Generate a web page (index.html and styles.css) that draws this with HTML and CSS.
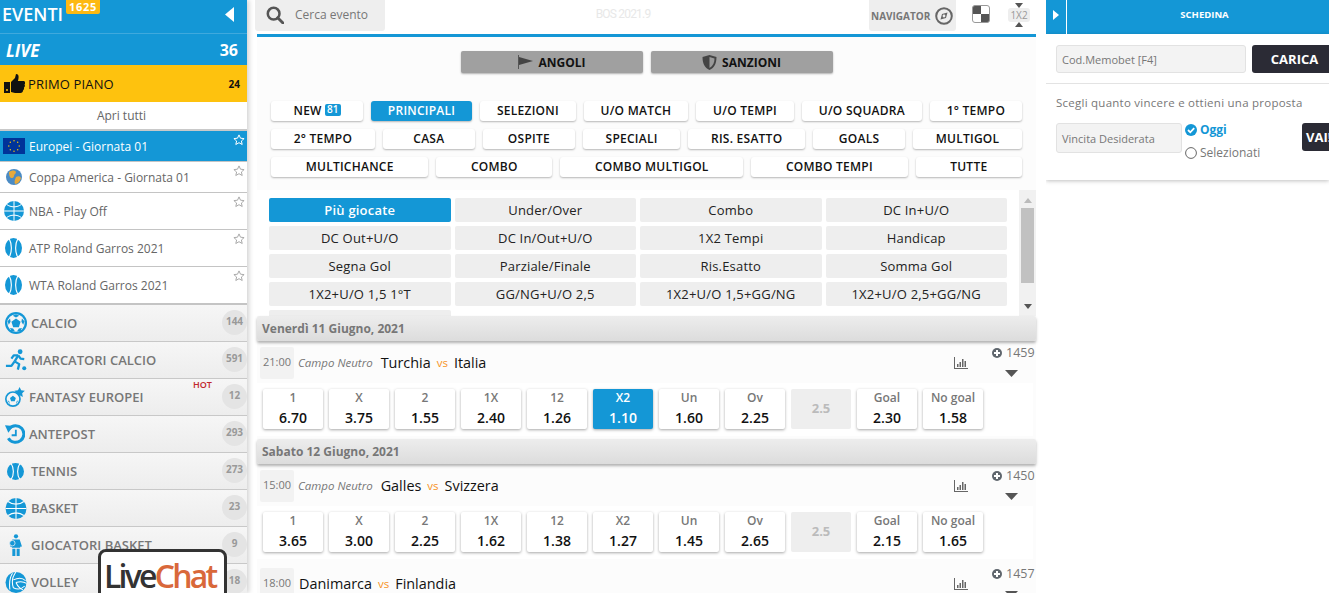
FILE: index.html
```html
<!DOCTYPE html>
<html lang="it">
<head>
<meta charset="utf-8">
<title>Eventi</title>
<link rel="stylesheet" href="styles.css">
</head>
<body>
<svg class="defs" width="0" height="0" aria-hidden="true">
  <symbol id="i-basket" viewBox="0 0 24 24"><circle cx="12" cy="12" r="12" fill="#1497d6"/><g fill="none" stroke="#fff" stroke-width="1.2"><path d="M12 0v24M0 12h24M3 4c5 4 13 4 18 0M3 20c5-4 13-4 18 0"/></g></symbol>
  <symbol id="i-tennis" viewBox="0 0 24 24" preserveAspectRatio="none"><circle cx="12" cy="12" r="12" fill="#1497d6"/><g fill="none" stroke="#fff" stroke-width="1.6"><path d="M6 1c4 6 4 16 0 22M18 1c-4 6-4 16 0 22"/></g></symbol>
  <symbol id="i-soccer" viewBox="0 0 24 24"><circle cx="12" cy="12" r="12" fill="#1497d6"/><circle cx="12" cy="12" r="9.5" fill="#f4f4f4"/><path d="M12 7l5 3.6-1.9 5.9H8.900L7 10.600zM12 2.500l3.500 1.500-3.500 2-3.500-2zM2.800 10l2.700-3 .6 3.500-2 3.500zM21.200 10l-2.700-3-.6 3.500 2 3.500zM7 21l-1.500-3.500 3.300.6 2 3zM17 21l1.500-3.500-3.300.6-2 3z" fill="#1497d6"/></symbol>
  <symbol id="i-run" viewBox="0 0 24 24"><circle cx="16.500" cy="3" r="2.600" fill="#1497d6"/><circle cx="21" cy="21" r="2.200" fill="#1497d6"/><g fill="none" stroke="#1497d6" stroke-width="2.500" stroke-linejoin="round"><path d="M14.500 7L10.500 13.500"/><path d="M14.500 7l2.500 3.500 4 .5"/><path d="M14.500 7H9.500L7 10.500"/><path d="M10.500 13.500l5 3-1.500 6"/><path d="M10.500 13.500L7 18.500H1"/></g></symbol>
  <symbol id="i-fantasy" viewBox="0 0 24 24"><path d="M17.500 0l1.900 4 4.400.6-3.200 3 .8 4.400-3.900-2.100-3.900 2.100.8-4.400-3.200-3 4.400-.6z" fill="#1497d6"/><circle cx="9.500" cy="14.500" r="8.500" fill="#f4f4f4" stroke="#1497d6" stroke-width="2"/><path d="M9.500 10.500l3.500 2.600-1.300 4.100H7.300L6 13.100zM3 16l2 1 1 4zM16 16l-2 1-1 4z" fill="#1497d6"/></symbol>
  <symbol id="i-ante" viewBox="0 0 24 24"><g fill="none" stroke="#1497d6" stroke-width="3.600"><path d="M5 5.500A10 10 0 1 1 4 17"/><path d="M13 7v6.500H8" stroke-width="2.200"/></g><path d="M0 1.500l10 1-6 8z" fill="#1497d6"/></symbol>
  <symbol id="i-player" viewBox="0 0 16 24"><g fill="#1497d6"><circle cx="8" cy="2.500" r="2.300"/><path d="M4 6h8l2.500 7.500-2 .5V15H3.500v-1l-2-.5zM4 16h3.300v8H4zM8.700 16H12v8H8.700z"/></g><circle cx="4" cy="10" r="3" fill="#1497d6" stroke="#f4f4f4" stroke-width=".8"/></symbol>
  <symbol id="i-volley" viewBox="0 0 24 24"><circle cx="12" cy="12" r="12" fill="#1497d6"/><g fill="none" stroke="#fff" stroke-width="1.200"><path d="M12 0c-4 5-5 12-3 18M8 1.500C5 6 4 12 5 20M12 12c6-2 9-1 12 1M9 9c6-3 11-2 14 1M12 12c2 5 6 8 8 8M9 18c4 2 9 2 13-2"/></g></symbol>
  <symbol id="i-stats" viewBox="0 0 14 12"><g fill="#666"><path d="M0 0h1v11h13v1H0z"/><path d="M3 7h1.500v3H3zM5.500 5H7v5H5.500zM8 2h1.500v8H8zM10.500 4H12v6h-1.500z"/></g></symbol>
  <symbol id="i-plus" viewBox="0 0 10 10"><circle cx="5" cy="5" r="5" fill="#5f666d"/><path d="M4 2h2v2h2v2H6v2H4V6H2V4h2z" fill="#fff"/></symbol>
  <symbol id="i-star" viewBox="0 0 12 12"><path d="M6 .9l1.500 3.300 3.600.4-2.700 2.400.8 3.500L6 8.700l-3.200 1.800.8-3.500L.9 4.600l3.600-.4z" fill="none" stroke="currentColor" stroke-width="1"/></symbol>
</svg>

<div class="app">
  <aside class="side">
    <div class="side-head">
      <span class="side-title">EVENTI</span><span class="side-badge">1625</span>
      <svg class="side-arrow" width="10" height="15" viewBox="0 0 10 15"><path d="M9 0v15L0 7.500z" fill="#fff"/></svg>
    </div>
    <div class="live"><span class="live-label">LIVE</span><span>36</span></div>
    <div class="primo">
      <svg class="primo-icon" width="21" height="19" viewBox="0 0 21 19"><path d="M0 8h6v11H0z" fill="#111"/><path d="M7 8l4-4 1-4c3 0 3 3 2 7h6c2 1 1 3 .5 3.500.8 1 .5 2.500-.5 3 .3 1.500-.2 2.500-1 3 0 1.500-1 2.500-2.500 2.500H11L7 18z" fill="#111"/><circle cx="3" cy="16" r="1" fill="#fec20e"/></svg>
      <span class="primo-label">PRIMO PIANO</span><span class="primo-count">24</span>
    </div>
    <div class="open-all">Apri tutti</div>
    <div class="league league-on">
      <svg class="flag" width="22" height="16" viewBox="0 0 22 16"><rect width="22" height="16" fill="#003399"/><g fill="#fc0"><circle cx="11" cy="2.800" r=".7"/><circle cx="11" cy="13.200" r=".7"/><circle cx="5.800" cy="8" r=".7"/><circle cx="16.200" cy="8" r=".7"/><circle cx="7.300" cy="4.300" r=".7"/><circle cx="14.700" cy="4.300" r=".7"/><circle cx="7.300" cy="11.700" r=".7"/><circle cx="14.700" cy="11.700" r=".7"/></g></svg>
      <span class="league-name">Europei - Giornata 01</span>
      <svg class="star" width="12" height="12"><use href="#i-star"/></svg>
    </div>
    <div class="league">
      <svg class="league-icon" width="16" height="16" viewBox="0 0 16 16"><circle cx="8" cy="8" r="8" fill="#4b8bc4"/><path d="M3 3c3-2 6-2 7 0 0 2-2 2-2 4s-3 3-4 1-1-3-1-5zM10 8c2-1 4-1 5 1-1 3-3 6-6 6-1-2 0-5 1-7z" fill="#e8a93a"/></svg>
      <span class="league-name">Coppa America - Giornata 01</span>
      <svg class="star" width="12" height="12"><use href="#i-star"/></svg>
    </div>
    <div class="league league-tall">
      <svg class="league-icon-lg" width="20" height="20"><use href="#i-basket"/></svg>
      <span class="league-name">NBA - Play Off</span>
      <svg class="star" width="12" height="12"><use href="#i-star"/></svg>
    </div>
    <div class="league league-tall">
      <svg class="league-ball" width="17" height="20"><use href="#i-tennis"/></svg>
      <span class="league-name">ATP Roland Garros 2021</span>
      <svg class="star" width="12" height="12"><use href="#i-star"/></svg>
    </div>
    <div class="league league-tall league-last">
      <svg class="league-ball" width="17" height="20"><use href="#i-tennis"/></svg>
      <span class="league-name">WTA Roland Garros 2021</span>
      <svg class="star" width="12" height="12"><use href="#i-star"/></svg>
    </div>

    <div class="sport"><svg class="sport-icon" width="22" height="22"><use href="#i-soccer"/></svg><span class="sport-name">CALCIO</span><span class="sport-count">144</span></div>
    <div class="sport"><svg class="sport-icon" width="22" height="22"><use href="#i-run"/></svg><span class="sport-name">MARCATORI CALCIO</span><span class="sport-count">591</span></div>
    <div class="sport"><svg class="sport-icon sport-icon-tight" width="20" height="20"><use href="#i-fantasy"/></svg><span class="sport-name">FANTASY EUROPEI</span><span class="hot">HOT</span><span class="sport-count">12</span></div>
    <div class="sport"><svg class="sport-icon sport-icon-tight" width="20" height="20"><use href="#i-ante"/></svg><span class="sport-name">ANTEPOST</span><span class="sport-count">293</span></div>
    <div class="sport"><svg class="sport-ball" width="17" height="17"><use href="#i-tennis"/></svg><span class="sport-name">TENNIS</span><span class="sport-count">273</span></div>
    <div class="sport"><svg class="sport-icon" width="22" height="21"><use href="#i-basket"/></svg><span class="sport-name">BASKET</span><span class="sport-count">23</span></div>
    <div class="sport"><svg class="sport-icon" width="22" height="22"><use href="#i-player"/></svg><span class="sport-name">GIOCATORI BASKET</span><span class="sport-count">9</span></div>
    <div class="sport"><svg class="sport-icon" width="22" height="21"><use href="#i-volley"/></svg><span class="sport-name">VOLLEY</span><span class="sport-count">18</span></div>
  </aside>

  <main class="main">
    <div class="top">
      <div class="search">
        <svg width="18" height="18" viewBox="0 0 20 20"><circle cx="8.500" cy="8.500" r="6.500" fill="none" stroke="#555" stroke-width="2.800"/><path d="M13 13l6 6" stroke="#555" stroke-width="3.200" stroke-linecap="round"/></svg>
        <span>Cerca evento</span>
      </div>
      <div class="version">BOS 2021.9</div>
      <div class="nav-box">
        <span>NAVIGATOR</span>
        <svg width="18" height="18" viewBox="0 0 18 18"><circle cx="9" cy="9" r="7.800" fill="none" stroke="#666" stroke-width="2"/><path d="M5.500 12.500l1.500-5.500 5.500-1.500-1.500 5.500z" fill="#666"/><circle cx="9" cy="9" r="1.400" fill="#eee"/></svg>
      </div>
      <svg class="checker" width="18" height="18" viewBox="0 0 18 18"><path d="M3 .5h6V9H.5V3A2.500 2.500 0 0 1 3 .5zM9 9h8.500v6a2.500 2.500 0 0 1-2.500 2.500H9z" fill="#555"/><rect x=".5" y=".5" width="17" height="17" rx="2.500" fill="none" stroke="#999"/></svg>
      <div class="mode">
        <svg width="8" height="5" viewBox="0 0 8 5"><path d="M0 0h8L4 5z" fill="#555"/></svg>
        <span>1X2</span>
        <svg width="8" height="5" viewBox="0 0 8 5"><path d="M0 5h8L4 0z" fill="#555"/></svg>
      </div>
    </div>
    <div class="blue-line"></div>

    <div class="content">
      <div class="specials">
        <div class="special">
          <svg width="16" height="14" viewBox="0 0 16 14"><path d="M1 0h1v14H1z" fill="#555"/><path d="M2 2l14 4-14 4z" fill="#444"/></svg>
          <span>ANGOLI</span>
        </div>
        <div class="special">
          <svg width="15" height="15" viewBox="0 0 15 15"><path d="M7.500 0l7 2c0 6-2 11-7 13-5-2-7-7-7-13z" fill="#444"/><path d="M7.500 2l5 1.500c0 4-1.500 7.500-5 9.500z" fill="#999"/></svg>
          <span>SANZIONI</span>
        </div>
      </div>

      <div class="tabs">
        <div class="tab-row">
          <div class="tab">NEW <span class="tab-badge">81</span></div>
          <div class="tab tab-on">PRINCIPALI</div>
          <div class="tab">SELEZIONI</div>
          <div class="tab">U/O MATCH</div>
          <div class="tab">U/O TEMPI</div>
          <div class="tab">U/O SQUADRA</div>
          <div class="tab">1° TEMPO</div>
        </div>
        <div class="tab-row">
          <div class="tab">2° TEMPO</div>
          <div class="tab">CASA</div>
          <div class="tab">OSPITE</div>
          <div class="tab">SPECIALI</div>
          <div class="tab">RIS. ESATTO</div>
          <div class="tab">GOALS</div>
          <div class="tab">MULTIGOL</div>
        </div>
        <div class="tab-row">
          <div class="tab">MULTICHANCE</div>
          <div class="tab">COMBO</div>
          <div class="tab">COMBO MULTIGOL</div>
          <div class="tab">COMBO TEMPI</div>
          <div class="tab">TUTTE</div>
        </div>
      </div>

      <div class="markets">
        <div class="market-grid">
          <div class="market market-on">Più giocate</div>
          <div class="market">Under/Over</div>
          <div class="market">Combo</div>
          <div class="market">DC In+U/O</div>
          <div class="market">DC Out+U/O</div>
          <div class="market">DC In/Out+U/O</div>
          <div class="market">1X2 Tempi</div>
          <div class="market">Handicap</div>
          <div class="market">Segna Gol</div>
          <div class="market">Parziale/Finale</div>
          <div class="market">Ris.Esatto</div>
          <div class="market">Somma Gol</div>
          <div class="market">1X2+U/O 1,5 1°T</div>
          <div class="market">GG/NG+U/O 2,5</div>
          <div class="market">1X2+U/O 1,5+GG/NG</div>
          <div class="market">1X2+U/O 2,5+GG/NG</div>
          <div class="market"></div>
        </div>
        <div class="scroll">
          <svg width="8" height="5" viewBox="0 0 8 5"><path d="M0 5h8L4 0z" fill="#bbb"/></svg>
          <div class="scroll-thumb"></div>
          <svg width="8" height="5" viewBox="0 0 8 5"><path d="M0 0h8L4 5z" fill="#555"/></svg>
        </div>
      </div>

      <div class="date">Venerdì 11 Giugno, 2021</div>
      <div class="event">
        <span class="time">21:00</span><span class="venue">Campo Neutro</span>
        <span class="team">Turchia</span><span class="vs">vs</span><span class="team">Italia</span>
        <svg class="stats" width="14" height="12"><use href="#i-stats"/></svg>
        <div class="more"><div class="more-top"><svg width="10" height="10"><use href="#i-plus"/></svg><span>1459</span></div><svg class="more-arrow" width="13" height="7" viewBox="0 0 13 7"><path d="M0 0h13L6.500 7z" fill="#555"/></svg></div>
      </div>
      <div class="odds">
        <div class="odd"><span class="odd-k">1</span><span class="odd-v">6.70</span></div>
        <div class="odd"><span class="odd-k">X</span><span class="odd-v">3.75</span></div>
        <div class="odd"><span class="odd-k">2</span><span class="odd-v">1.55</span></div>
        <div class="odd"><span class="odd-k">1X</span><span class="odd-v">2.40</span></div>
        <div class="odd"><span class="odd-k">12</span><span class="odd-v">1.26</span></div>
        <div class="odd odd-on"><span class="odd-k">X2</span><span class="odd-v">1.10</span></div>
        <div class="odd"><span class="odd-k">Un</span><span class="odd-v">1.60</span></div>
        <div class="odd"><span class="odd-k">Ov</span><span class="odd-v">2.25</span></div>
        <div class="odd-line">2.5</div>
        <div class="odd"><span class="odd-k">Goal</span><span class="odd-v">2.30</span></div>
        <div class="odd"><span class="odd-k">No goal</span><span class="odd-v">1.58</span></div>
      </div>

      <div class="date">Sabato 12 Giugno, 2021</div>
      <div class="event">
        <span class="time">15:00</span><span class="venue">Campo Neutro</span>
        <span class="team">Galles</span><span class="vs">vs</span><span class="team">Svizzera</span>
        <svg class="stats" width="14" height="12"><use href="#i-stats"/></svg>
        <div class="more"><div class="more-top"><svg width="10" height="10"><use href="#i-plus"/></svg><span>1450</span></div><svg class="more-arrow" width="13" height="7" viewBox="0 0 13 7"><path d="M0 0h13L6.500 7z" fill="#555"/></svg></div>
      </div>
      <div class="odds">
        <div class="odd"><span class="odd-k">1</span><span class="odd-v">3.65</span></div>
        <div class="odd"><span class="odd-k">X</span><span class="odd-v">3.00</span></div>
        <div class="odd"><span class="odd-k">2</span><span class="odd-v">2.25</span></div>
        <div class="odd"><span class="odd-k">1X</span><span class="odd-v">1.62</span></div>
        <div class="odd"><span class="odd-k">12</span><span class="odd-v">1.38</span></div>
        <div class="odd"><span class="odd-k">X2</span><span class="odd-v">1.27</span></div>
        <div class="odd"><span class="odd-k">Un</span><span class="odd-v">1.45</span></div>
        <div class="odd"><span class="odd-k">Ov</span><span class="odd-v">2.65</span></div>
        <div class="odd-line">2.5</div>
        <div class="odd"><span class="odd-k">Goal</span><span class="odd-v">2.15</span></div>
        <div class="odd"><span class="odd-k">No goal</span><span class="odd-v">1.65</span></div>
      </div>

      <div class="event">
        <span class="time">18:00</span>
        <span class="team">Danimarca</span><span class="vs">vs</span><span class="team">Finlandia</span>
        <svg class="stats" width="14" height="12"><use href="#i-stats"/></svg>
        <div class="more"><div class="more-top"><svg width="10" height="10"><use href="#i-plus"/></svg><span>1457</span></div><svg class="more-arrow" width="13" height="7" viewBox="0 0 13 7"><path d="M0 0h13L6.500 7z" fill="#555"/></svg></div>
      </div>
    </div>
  </main>

  <aside class="slip">
    <div class="slip-head">
      <div class="slip-toggle"><svg width="6" height="10" viewBox="0 0 6 10"><path d="M0 0v10l6-5z" fill="#fff"/></svg></div>
      <div class="slip-title">SCHEDINA</div>
    </div>
    <div class="slip-body">
      <div class="slip-code">
        <div class="field field-code">Cod.Memobet [F4]</div>
        <div class="dark-btn btn-load">CARICA</div>
      </div>
      <div class="slip-want">
        <div class="want-text">Scegli quanto vincere e ottieni una proposta</div>
        <div class="want-row">
          <div class="field field-win">Vincita Desiderata</div>
          <div class="choices">
            <div class="choice choice-on"><svg width="12" height="12" viewBox="0 0 12 12"><circle cx="6" cy="6" r="6" fill="#1497d6"/><path d="M3 6l2.300 2.300L9.200 4.200" fill="none" stroke="#fff" stroke-width="1.800"/></svg><span>Oggi</span></div>
            <div class="choice"><svg width="12" height="12" viewBox="0 0 12 12"><circle cx="6" cy="6" r="5.400" fill="#fff" stroke="#666"/></svg><span>Selezionati</span></div>
          </div>
          <div class="dark-btn btn-go">VAI!</div>
        </div>
      </div>
    </div>
  </aside>
</div>

<div class="livechat"><span class="lc-live">Live</span><span class="lc-chat">Chat</span></div>
</body>
</html>
```
FILE: styles.css
```css
* { box-sizing: border-box; }
html, body { margin: 0; padding: 0; height: 593px; overflow: hidden; background: #fff; }
body { font-family: "Open Sans", "Liberation Sans", sans-serif; color: #111; position: relative; }
.defs { position: absolute; }
svg { display: block; flex: none; }

.app { display: flex; width: 1329px; height: 593px; align-items: flex-start; }

/* sidebar */
.side { width: 247px; height: 593px; flex: none; background: #fff; box-shadow: 2px 0 5px rgba(0,0,0,.18); overflow: hidden; }
.side-head { height: 34px; background: #1497d6; border-bottom: 1px solid #3fa9dd; color: #fff; display: flex; align-items: flex-start; position: relative; padding-left: 2px; }
.side-title { font-size: 18px; font-weight: 600; line-height: 29px; }
.side-badge { background: #fdb913; color: #fff; font-size: 11px; font-weight: 700; line-height: 13px; height: 14px; padding: 0 3px; margin-left: 3px; border-radius: 0 0 2px 2px; letter-spacing: .7px; }
.side-arrow { margin-left: auto; margin-right: 12px; margin-top: 7px; }
.live { height: 31px; background: #1497d6; color: #fff; display: flex; justify-content: space-between; align-items: center; padding: 1px 9px 0 6px; font-size: 16px; font-weight: 700; }
.live-label { font-style: italic; font-size: 17px; }
.primo { height: 37px; background: #fec20e; display: flex; align-items: center; padding-left: 4px; }
.primo-icon { margin-right: 3px; }
.primo-label { font-size: 13px; flex: 1; letter-spacing: .15px; }
.primo-count { font-size: 10px; font-weight: 700; margin-right: 7px; }
.open-all { height: 29px; border-bottom: 2px solid #c9c9c9; font-size: 12px; color: #666; text-align: center; line-height: 27px; padding-right: 4px; }
.league { height: 31px; border-bottom: 1px solid #c4c4c4; display: flex; align-items: center; padding-left: 6px; position: relative; color: #666; font-size: 12px; }
.league-tall { height: 37px; padding-left: 4px; }
.league-last { height: 38px; border-bottom: 2px solid #c4c4c4; }
.league-on { background: #1497d6; color: #fff; padding-left: 3px; }
.flag { margin-right: 4px; }
.league-icon { margin-right: 7px; }
.league-icon-lg { margin-right: 5px; }
.league-ball { margin: 0 7px 0 1px; }
.league-name { line-height: 29px; }
.star { position: absolute; right: 2px; top: 3px; color: #aaa; }
.league-on .star { color: #fff; }
.sport { height: 37px; border-bottom: 1px solid #c8c8c8; background: linear-gradient(#f6f6f6, #ededed); display: flex; align-items: center; padding-left: 5px; position: relative; color: #777; }
.sport-icon { margin-right: 4px; }
.sport-icon-tight { margin-right: 4px; }
.sport-ball { margin: 0 7px 0 2px; }
.sport-name { font-size: 13px; font-weight: 600; flex: 1; white-space: nowrap; }
.sport-count { width: 25px; height: 25px; border-radius: 50%; background: #e4e4e4; color: #999; font-size: 10px; font-weight: 700; text-align: center; line-height: 23px; position: absolute; right: 0; top: 5px; }
.hot { position: absolute; left: 193px; top: -1px; color: #c1272d; font-size: 9px; font-weight: 600; }

/* main */
.main { width: 781px; margin-left: 8px; flex: none; }
.top { height: 34px; display: flex; align-items: flex-start; position: relative; }
.search { width: 130px; height: 31px; background: #eee; border-radius: 0 0 3px 3px; display: flex; align-items: center; padding: 0 0 2px 11px; gap: 11px; color: #777; font-size: 12px; }
.version { width: 484px; color: #e8e8e8; font-family: Roboto, sans-serif; font-size: 12px; letter-spacing: -.8px; text-align: center; line-height: 28px; padding-right: 8px; white-space: nowrap; }
.nav-box { width: 87px; height: 31px; background: #eee; border-radius: 0 0 3px 3px; display: flex; align-items: center; padding-left: 2px; gap: 5px; color: #777; font-size: 10px; font-weight: 700; }
.checker { margin: 5px 0 0 16px; }
.mode { display: flex; flex-direction: column; align-items: center; margin: 3px 0 0 18px; width: 22px; color: #999; font-size: 10px; }
.mode span { background: #eee; border-radius: 3px; width: 22px; text-align: center; line-height: 14px; }
.blue-line { height: 3px; margin-left: 2px; background: #1497d6; }
.content { margin-left: 2px; background: #fcfcfc; }

.specials { display: flex; justify-content: center; gap: 8px; padding: 14px 0 28px; }
.special { width: 182px; height: 22px; background: #a0a0a0; border-radius: 2px; box-shadow: 0 1px 2px rgba(0,0,0,.3); display: flex; align-items: center; justify-content: center; gap: 5px; font-size: 12px; font-weight: 700; color: #111; }

.tabs { display: flex; flex-direction: column; gap: 8px; padding: 0 14px; margin-bottom: 13px; }
.tab-row { display: flex; gap: 8px; }
.tab { height: 20px; min-width: 92px; flex: 1 1 auto; background: #fff; border-radius: 3px; box-shadow: 0 1px 2px rgba(0,0,0,.28); font-size: 12px; font-weight: 600; letter-spacing: .25px; text-align: center; line-height: 19px; padding: 0 15px; white-space: nowrap; color: #111; }
.tab-on { background: #1497d6; color: #fff; }
.tab-badge { display: inline-block; background: #1497d6; color: #fff; font-size: 10px; line-height: 11px; height: 12px; padding: 0 2px; border-radius: 2px; vertical-align: 2px; letter-spacing: 0; }

.markets { height: 126px; background: #fff; display: flex; overflow: hidden; }
.market-grid { flex: 1; display: grid; grid-template-columns: repeat(4, 1fr); grid-auto-rows: 24px; gap: 4px; padding: 8px 12px 0; }
.market { background: #eee; border-radius: 2px; font-size: 13px; color: #222; text-align: center; line-height: 24px; letter-spacing: .2px; white-space: nowrap; }
.market-on { background: #1497d6; color: #fff; font-weight: 600; }
.scroll { width: 17px; flex: none; background: #f1f1f1; display: flex; flex-direction: column; align-items: center; padding-top: 8px; }
.scroll-thumb { width: 13px; height: 75px; background: #c1c1c1; margin: 5px 0 21px; }

.date { height: 25px; background: linear-gradient(#ededed, #dcdcdc); border-radius: 2px; box-shadow: 0 2px 3px rgba(0,0,0,.3); font-size: 12px; font-weight: 700; color: #777; line-height: 25px; padding-left: 5px; position: relative; white-space: nowrap; margin-top: 3px; }
.markets + .date { margin-top: 0; }
.event { height: 42px; display: flex; align-items: center; padding: 2px 3px 0; white-space: nowrap; }
.odds + .event { margin-top: 3px; }
.time { width: 34px; height: 32px; background: #f2f2f2; border-radius: 2px; color: #777; font-size: 11px; text-align: center; line-height: 30px; margin-right: 4px; flex: none; }
.venue { font-size: 11.500px; font-style: italic; color: #777; margin: 0 8px 2px 0; }
.time + .team { margin-left: 1px; }
.team { font-size: 14.400px; color: #111; margin-bottom: 2px; }
.vs { color: #f7931e; font-size: 11.500px; margin: 0 6px 2px; }
.stats { margin-left: auto; }
.more { width: 41px; margin: 0 0 3px 24px; display: flex; flex-direction: column; align-items: flex-start; color: #777; font-size: 12.500px; }
.more-top { display: flex; align-items: center; gap: 4px; line-height: 14px; }
.more-arrow { margin: 10px 0 0 13px; }

.odds { height: 53px; background: #fff; display: flex; gap: 6px; padding: 6px 0 0 6px; margin-right: 3px; }
.odd { width: 60px; height: 40px; background: #fff; border-radius: 2px; box-shadow: 0 1px 3px rgba(0,0,0,.35); display: flex; flex-direction: column; align-items: center; }
.odd-k { font-size: 12px; font-weight: 600; color: #777; line-height: 18px; white-space: nowrap; }
.odd-v { font-size: 14px; font-weight: 600; color: #111; line-height: 22px; }
.odd-on { background: #1497d6; }
.odd-on .odd-k, .odd-on .odd-v { color: #fff; }
.odd-line { width: 60px; height: 40px; background: #eee; border-radius: 2px; color: #bbb; font-size: 13px; font-weight: 700; text-align: center; line-height: 39px; }

/* slip */
.slip { width: 283px; margin-left: 10px; flex: none; overflow: hidden; padding-bottom: 6px; }
.slip-head { height: 34px; background: #1497d6; display: flex; }
.slip-toggle { width: 21px; border-right: 1px solid #fff; padding: 10px 0 0 7px; }
.slip-title { flex: 1; text-align: center; color: #fff; font-size: 9.500px; font-weight: 700; line-height: 30px; padding-left: 13px; }
.slip-body { height: 146px; background: #fff; box-shadow: 0 1px 4px rgba(0,0,0,.25); }
.slip-code { height: 50px; border-bottom: 1px solid #e3e3e3; display: flex; gap: 6px; padding: 11px 0 0 10px; }
.field { background: #f3f3f3; border: 1px solid #e2e2e2; border-radius: 3px; color: #777; font-size: 11px; display: flex; align-items: center; padding-left: 5px; }
.field-code { width: 190px; height: 28px; flex: none; }
.dark-btn { background: #2b2b35; color: #fff; font-weight: 700; border-radius: 3px; flex: none; }
.btn-load { width: 85px; height: 28px; font-size: 13px; line-height: 28px; text-align: center; }
.slip-want { padding: 11px 0 0 10px; }
.want-text { font-size: 11.500px; color: #777; line-height: 16px; letter-spacing: .25px; white-space: nowrap; }
.want-row { display: flex; margin-top: 12px; }
.field-win { width: 126px; height: 30px; flex: none; font-size: 11px; }
.choices { margin: -2px 0 0 3px; display: flex; flex-direction: column; gap: 5px; width: 117px; flex: none; }
.choice { display: flex; align-items: center; gap: 3px; font-size: 12px; color: #777; line-height: 18px; }
.choice-on { color: #1497d6; font-weight: 700; }
.btn-go { width: 50px; height: 28px; font-size: 13px; line-height: 28px; padding-left: 4px; white-space: nowrap; }

/* chat widget */
.livechat { position: absolute; left: 98px; top: 549px; width: 129px; height: 60px; background: #fff; border: 3px solid #333; border-radius: 8px; font-size: 32px; font-weight: 600; line-height: 33px; padding: 7px 0 0 3px; letter-spacing: -2.800px; white-space: nowrap; z-index: 5; }
.lc-live { color: #333; }
.lc-chat { color: #d9683a; }
```
